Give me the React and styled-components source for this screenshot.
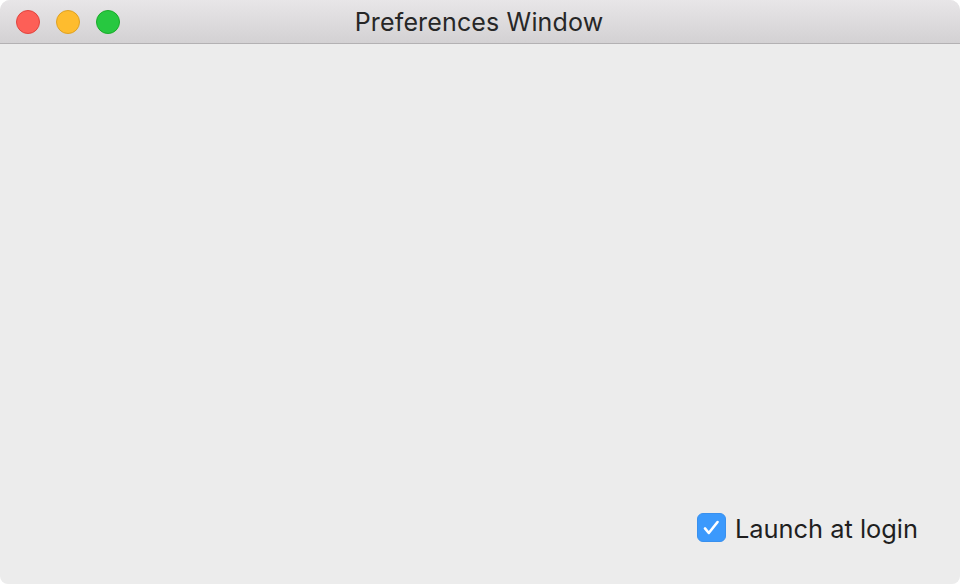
import React, { useState } from "react";
import styled, { createGlobalStyle } from "styled-components";

const GlobalStyle = createGlobalStyle`
  html, body {
    margin: 0;
    padding: 0;
    background: #ffffff;
  }
  * {
    box-sizing: border-box;
  }
`;

function TrafficLights() {
  return (
    <Lights>
      <Light color="#fd5f57" edge="#e0443e" />
      <Light color="#febc2e" edge="#dea123" />
      <Light color="#27c840" edge="#1aab29" />
    </Lights>
  );
}

function App() {
  const [launch, setLaunch] = useState(true);

  return (
    <>
      <GlobalStyle />
      <Window>
        <TitleBar>
          <TrafficLights />
          <Title>Preferences Window</Title>
        </TitleBar>
        <Content>
          <CheckRow onClick={() => setLaunch(!launch)}>
            <CheckBox checked={launch}>
              {launch && (
                <svg width="29" height="29" viewBox="0 0 29 29">
                  <path
                    d="M7.5 15.5 L11.6 20.4 L21 8.6"
                    fill="none"
                    stroke="#fff"
                    strokeWidth="2.8"
                    strokeLinecap="round"
                    strokeLinejoin="round"
                  />
                </svg>
              )}
            </CheckBox>
            <Label>Launch at login</Label>
          </CheckRow>
        </Content>
      </Window>
    </>
  );
}

const Window = styled.div`
  width: 960px;
  height: 584px;
  display: flex;
  flex-direction: column;
  background: #ececec;
  border-radius: 10px 10px 8px 8px;
  overflow: hidden;
  font-family: Inter, "Liberation Sans", sans-serif;
`;

const TitleBar = styled.div`
  height: 44px;
  flex: none;
  display: flex;
  align-items: center;
  justify-content: center;
  position: relative;
  background: linear-gradient(#e8e6e8, #d3d1d3);
  border-bottom: 1px solid #b3b1b3;
`;

const Lights = styled.div`
  position: absolute;
  left: 16px;
  top: 10px;
  display: flex;
  gap: 16px;
`;

const Light = styled.div`
  width: 24px;
  height: 24px;
  border-radius: 50%;
  background: ${(p) => p.color};
  border: 1px solid ${(p) => p.edge};
`;

const Title = styled.div`
  font-size: 25px;
  color: #272727;
  letter-spacing: 0.15px;
  margin-top: 1px;
  margin-left: -2px;
`;

const Content = styled.div`
  flex: 1;
  display: flex;
  flex-direction: column;
  justify-content: flex-end;
  align-items: flex-end;
  padding: 0 42px 40px 0;
`;

const CheckRow = styled.label`
  display: flex;
  align-items: center;
  gap: 9px;
  cursor: default;
  user-select: none;
`;

const CheckBox = styled.span`
  width: 29px;
  height: 29px;
  border-radius: 6px;
  display: flex;
  align-items: center;
  justify-content: center;
  background: ${(p) => (p.checked ? "#3b99fc" : "#fff")};
  border: 1px solid ${(p) => (p.checked ? "#3990ee" : "#b5b5b5")};
`;

const Label = styled.span`
  font-size: 25.4px;
  color: #1f1f1f;
  margin-top: 2px;
`;

export default App;
